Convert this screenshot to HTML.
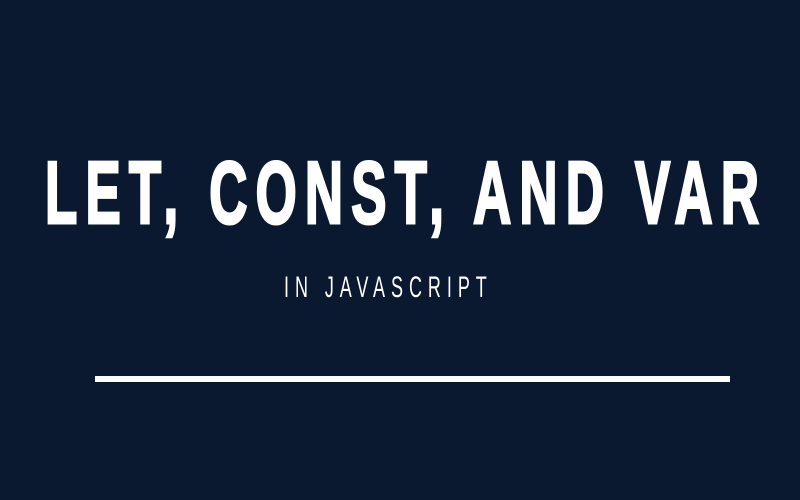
<!DOCTYPE html>
<html><head><style>
html,body{margin:0;padding:0;background:#0a1930;width:800px;height:500px;overflow:hidden}
</style></head><body>
<svg width="800" height="500" xmlns="http://www.w3.org/2000/svg">
<rect width="800" height="500" fill="#0a1930"/>
<g transform="translate(45,223) scale(0.6,1)">
<text x="0" y="0" font-family="Liberation Sans, sans-serif" font-weight="bold" font-size="88" fill="#fff" stroke="#fff" stroke-width="3" textLength="1190" lengthAdjust="spacing">LET, CONST, AND VAR</text>
</g>
<g transform="translate(284,297) scale(0.6,1)">
<text x="0" y="0" font-family="Liberation Sans, sans-serif" font-size="30" fill="#fff" textLength="338" lengthAdjust="spacing">IN JAVASCRIPT</text>
</g>
<rect x="95" y="376" width="635" height="6" fill="#fff"/>
</svg>
</body></html>
